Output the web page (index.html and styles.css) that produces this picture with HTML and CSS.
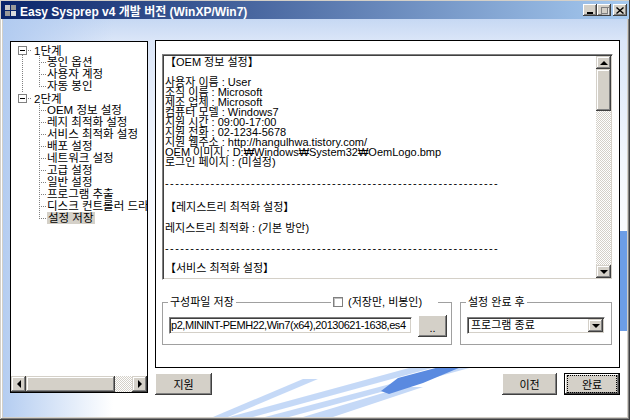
FILE: index.html
```html
<!doctype html>
<html lang="ko">
  <head>
    <meta charset="UTF-8" />
    <title>Easy Sysprep v4 개발 버전 (WinXP/Win7)</title>
    <link rel="stylesheet" href="styles.css">
  </head>
  <body>
    <div class="window">
      <div class="titlebar">
        <svg class="app-icon" width="11" height="11" viewBox="0 0 11 11">
          <rect x="0" y="0" width="5" height="5" fill="#c8c8c8" />
          <rect x="6" y="0" width="5" height="5" fill="#9a9a9a" />
          <rect x="0" y="6" width="5" height="5" fill="#9a9a9a" />
          <rect x="6" y="6" width="5" height="5" fill="#dcdcdc" />
        </svg>
        <span class="title">Easy Sysprep v4 개발 버전 (WinXP/Win7)</span>
        <div class="caption">
          <div class="cap-btn">
            <svg width="8" height="7" viewBox="0 0 8 7"><rect x="1" y="5" width="6" height="2" fill="#000" /></svg>
          </div>
          <div class="cap-btn">
            <svg width="9" height="9" viewBox="0 0 9 9">
              <rect x="1.5" y="1.5" width="6" height="6" fill="none" stroke="#808080" />
              <rect x="1" y="1" width="8" height="1" fill="#808080" />
              <path d="M9 2v7H2" fill="none" stroke="#fff" />
            </svg>
          </div>
          <div class="cap-btn close">
            <svg width="8" height="7" viewBox="0 0 8 7">
              <path d="M0.5 0.5l7 6M7.5 0.5l-7 6" stroke="#000" stroke-width="1.4" />
            </svg>
          </div>
        </div>
      </div>

      <div class="client">
        <!-- 왼쪽 트리 -->
        <div class="tree">
          <div class="tree-body">
            <div class="group">
              <div class="root"><span class="expander"></span><span class="stub"></span>1단계</div>
              <ul class="children">
                <li>봉인 옵션</li>
                <li>사용자 계정</li>
                <li>자동 봉인</li>
              </ul>
            </div>
            <div class="group">
              <div class="root"><span class="expander"></span><span class="stub"></span>2단계</div>
              <ul class="children">
                <li>OEM 정보 설정</li>
                <li>레지 최적화 설정</li>
                <li>서비스 최적화 설정</li>
                <li>배포 설정</li>
                <li>네트워크 설정</li>
                <li>고급 설정</li>
                <li>일반 설정</li>
                <li>프로그램 추출</li>
                <li>디스크 컨트롤러 드라이버</li>
                <li><span class="sel">설정 저장</span></li>
              </ul>
            </div>
          </div>
          <div class="hscroll">
            <div class="sb-btn"><span class="arr-left"></span></div>
            <div class="sb-thumb"></div>
            <div class="sb-track"></div>
            <div class="sb-btn"><span class="arr-right"></span></div>
          </div>
        </div>

        <!-- 오른쪽 -->
        <div class="main">
          <div class="panel">
            <div class="report">
              <div class="report-text">
                <div class="ln">【OEM 정보 설정】</div>
                <div class="ln"></div>
                <div class="ln">사용자 이름 : User</div>
                <div class="ln">조직 이름 : Microsoft</div>
                <div class="ln">제조 업체 : Microsoft</div>
                <div class="ln">컴퓨터 모델 : Windows7</div>
                <div class="ln">지원 시간 : 09:00-17:00</div>
                <div class="ln">지원 전화 : 02-1234-5678</div>
                <div class="ln">지원 웹주소 : http://hangulhwa.tistory.com/</div>
                <div class="ln">OEM 이미지 : D:₩Windows₩System32₩OemLogo.bmp</div>
                <div class="ln">로그인 페이지 : (미설정)</div>
                <div class="ln dash gap-11">------------------------------------------------------------------</div>
                <div class="ln gap-14">【레지스트리 최적화 설정】</div>
                <div class="ln gap-11">레지스트리 최적화 : (기본 방안)</div>
                <div class="ln dash gap-10">------------------------------------------------------------------</div>
                <div class="ln gap-10">【서비스 최적화 설정】</div>
              </div>
              <div class="vscroll">
                <div class="sb-btn"><span class="arr-up"></span></div>
                <div class="sb-thumb"></div>
                <div class="sb-track"></div>
                <div class="sb-btn"><span class="arr-down"></span></div>
              </div>
            </div>

            <div class="groups">
              <div class="grp grp-save">
                <div class="grp-head">
                  <span class="lbl">구성파일 저장</span>
                  <label class="chk"><span class="chk-box"></span>(저장만, 비봉인)</label>
                </div>
                <div class="grp-body">
                  <div class="edit">p2,MININT-PEMH22,Win7(x64),20130621-1638,es4</div>
                  <div class="btn btn-dots">..</div>
                </div>
              </div>
              <div class="grp grp-done">
                <div class="grp-head">
                  <span class="lbl">설정 완료 후</span>
                </div>
                <div class="grp-body">
                  <div class="combo">
                    <span class="combo-text">프로그램 종료</span>
                    <span class="sb-btn combo-btn"><span class="arr-down"></span></span>
                  </div>
                </div>
              </div>
            </div>
          </div>

          <div class="buttons">
            <div class="btn btn-help">지원</div>
            <!-- 배경 줄무늬 -->
            <svg class="streaks" width="290" height="49" viewBox="212 368 290 49">
              <g fill="#96b9f0" fill-opacity="0.55">
                <polygon points="229,417 420,365 443,365 253,417" />
                <polygon points="265,417 455,367 473,367 289,417" />
                <polygon points="303,417 403,387 423,387 333,417" />
                <polygon points="213,417 303,379 318,379 228,417" />
              </g>
              <polygon fill="#5a8ae0" points="381,391 398,378 458,362 473,362 423,383 389,394" />
            </svg>
            <div class="btn btn-prev">이전</div>
            <div class="btn btn-done"><span class="focus">완료</span></div>
          </div>
        </div>
      </div>
    </div>
  </body>
</html>
```

FILE: styles.css
```css
/* 기본 */
* {
  box-sizing: border-box;
  margin: 0;
  padding: 0;
}

body {
  width: 630px;
  height: 420px;
  overflow: hidden;
  font-family: "Liberation Sans", "Noto Sans CJK KR", sans-serif;
  font-size: 11px;
  color: #000;
}

/* 창 테두리 */
.window {
  width: 630px;
  height: 420px;
  padding: 1px;
  display: flex;
  flex-direction: column;
  background-color: #d4d0c8;
  box-shadow: inset -1px -1px #404040, inset 1px 1px #d4d0c8,
    inset -2px -2px #808080, inset 2px 2px #fff;
}

.titlebar {
  height: 18px;
  display: flex;
  align-items: center;
  padding-left: 4px;
  background: linear-gradient(to right, #0a246a, #a6caf0);
  color: #fff;
  font-size: 12px;
  font-weight: bold;
  white-space: nowrap;
}

.app-icon {
  margin-right: 4px;
}

.caption {
  display: flex;
  margin-left: auto;
  margin-right: 2px;
}

.cap-btn {
  width: 14px;
  height: 12px;
  display: flex;
  align-items: center;
  justify-content: center;
  background-color: #d4d0c8;
  box-shadow: inset -1px -1px #404040, inset 1px 1px #fff,
    inset -2px -2px #808080;
}

.cap-btn.close {
  margin-left: 2px;
}

/* 클라이언트 영역 */
.client {
  flex: 1;
  display: flex;
  margin: 0 2px 2px;
  padding: 21px 7px 0;
  background-color: #fff;
  background-image:
    linear-gradient(#6c9de6, #6c9de6),
    linear-gradient(90deg, rgba(176, 202, 240, 0.95) 0, rgba(176, 202, 240, 0) 110px),
    linear-gradient(180deg, #c6d8f3 0, #dbe6f8 22px, #f2f6fd 140px, #fff 260px);
  background-position: 617px 212px, 0 0, 0 0;
  background-size: 7px 100px, 100% 100%, 100% 100%;
  background-repeat: no-repeat;
}

/* 스크롤바 공통 */
.sb-btn {
  display: flex;
  align-items: center;
  justify-content: center;
  background-color: #d4d0c8;
  box-shadow: inset -1px -1px #404040, inset 1px 1px #d4d0c8,
    inset -2px -2px #808080, inset 2px 2px #fff;
}

.sb-thumb {
  background-color: #d4d0c8;
  box-shadow: inset -1px -1px #404040, inset 1px 1px #d4d0c8,
    inset -2px -2px #808080, inset 2px 2px #fff;
}

.sb-track {
  flex: 1;
  background: repeating-conic-gradient(#d4d0c8 0 25%, #fff 0 50%) 0 0 / 2px 2px;
}

.arr-up,
.arr-down,
.arr-left,
.arr-right {
  width: 0;
  height: 0;
  border: 4px solid transparent;
}

.arr-up {
  border-top-width: 0;
  border-bottom-color: #000;
}

.arr-down {
  border-bottom-width: 0;
  border-top-color: #000;
}

.arr-left {
  border-left-width: 0;
  border-right-color: #000;
}

.arr-right {
  border-right-width: 0;
  border-left-color: #000;
}

/* 트리 */
.tree {
  width: 138px;
  height: 352px;
  margin-top: 1px;
  display: flex;
  flex-direction: column;
  border: 1px solid #000;
  background-color: #fff;
  font-size: 11.5px;
}

.tree-body {
  flex: 1;
  padding: 2px 0 0 7px;
  overflow: hidden;
}

.group:first-child {
  background: repeating-linear-gradient(#808080 0 1px, transparent 1px 2px) 4px 11px / 1px calc(100% - 11px) no-repeat;
}

.root {
  height: 12px;
  display: flex;
  align-items: center;
  white-space: nowrap;
}

.expander {
  width: 9px;
  height: 9px;
  border: 1px solid #808080;
  background: #fff linear-gradient(#000, #000) center / 5px 1px no-repeat;
}

.stub {
  width: 4px;
  height: 1px;
  margin: 0 2px 0 1px;
  background: repeating-linear-gradient(90deg, #808080 0 1px, transparent 1px 2px);
}

.children {
  list-style: none;
  margin-left: 21px;
}

.children li {
  height: 12px;
  line-height: 12px;
  padding-left: 8px;
  white-space: nowrap;
  background:
    repeating-linear-gradient(#808080 0 1px, transparent 1px 2px) 0 0 / 1px 100% no-repeat,
    repeating-linear-gradient(90deg, #808080 0 1px, transparent 1px 2px) 0 6px / 8px 1px no-repeat;
}

.children li:last-child {
  background-size: 1px 7px, 8px 1px;
}

.sel {
  padding: 0 1px;
  background-color: #d4d0c8;
}

.hscroll {
  height: 16px;
  display: flex;
}

.hscroll .sb-btn {
  width: 15px;
}

.hscroll .sb-thumb {
  width: 89px;
}

/* 오른쪽 */
.main {
  width: 465px;
  margin-left: 7px;
  display: flex;
  flex-direction: column;
}

.panel {
  height: 328px;
  padding: 13px 6px 0;
  border: 1px solid #000;
  background-color: #fff;
}

.report {
  height: 226px;
  display: flex;
  border: 1px solid;
  border-color: #808080 #fff #fff #808080;
  box-shadow: inset 1px 1px #404040, inset -1px -1px #d4d0c8;
}

.report-text {
  flex: 1;
  padding: 2px 0 0 2px;
  overflow: hidden;
  line-height: 10px;
  white-space: nowrap;
}

.ln {
  height: 10px;
}

.dash {
  letter-spacing: 1.4px;
}

.gap-10 {
  margin-top: 10px;
}

.gap-11 {
  margin-top: 11px;
}

.gap-14 {
  margin-top: 14px;
}

.vscroll {
  width: 15px;
  display: flex;
  flex-direction: column;
  margin: 1px 1px 1px 0;
}

.vscroll .sb-btn {
  height: 13px;
}

.vscroll .sb-thumb {
  height: 42px;
}

/* 그룹 박스 */
.groups {
  display: flex;
  gap: 8px;
  margin-top: 22px;
}

.grp {
  height: 43px;
  border: 1px solid #a0a0a0;
}

.grp-save {
  width: 290px;
}

.grp-done {
  width: 152px;
}

.grp-head {
  height: 12px;
  display: flex;
  margin-top: -7px;
  line-height: 12px;
  white-space: nowrap;
}

.lbl {
  margin-left: 5px;
  padding: 0 2px;
  background-color: #fff;
}

.chk {
  width: 107px;
  display: flex;
  align-items: center;
  gap: 5px;
  margin-left: auto;
  margin-right: 13px;
  padding-left: 2px;
  background-color: #fff;
}

.chk-box {
  width: 10px;
  height: 10px;
  border: 1px solid #808080;
  box-shadow: inset 1px 1px #c0c0c0;
  background-color: #fff;
}

.grp-body {
  display: flex;
  align-items: flex-start;
  padding: 7px 0 0 6px;
}

.edit {
  width: 243px;
  height: 17px;
  margin-top: 2px;
  padding: 0 1px;
  overflow: hidden;
  white-space: nowrap;
  line-height: 14px;
  letter-spacing: -0.45px;
  border: 1px solid;
  border-color: #808080 #fff #fff #808080;
  box-shadow: inset 1px 1px #404040, inset -1px -1px #d4d0c8;
}

.combo {
  width: 138px;
  height: 17px;
  margin-top: 2px;
  display: flex;
  align-items: center;
  padding: 1px;
  border: 1px solid;
  border-color: #808080 #fff #fff #808080;
  box-shadow: inset 1px 1px #404040, inset -1px -1px #d4d0c8;
}

.combo-text {
  flex: 1;
  padding-left: 2px;
  line-height: 13px;
}

.combo-btn {
  width: 15px;
  height: 13px;
}

/* 버튼 */
.btn {
  height: 22px;
  display: flex;
  align-items: center;
  justify-content: center;
  background-color: #d4d0c8;
  box-shadow: inset -1px -1px #404040, inset 1px 1px #fff,
    inset -2px -2px #808080, inset 2px 2px #d4d0c8;
}

.btn-dots {
  width: 29px;
  margin-left: 6px;
  padding-top: 4px;
}

.buttons {
  display: flex;
  align-items: flex-start;
  margin-top: 5px;
}

.streaks {
  flex-shrink: 0;
  margin-top: -5px;
}

.btn-help {
  width: 57px;
  flex-shrink: 0;
}

.btn-prev {
  width: 55px;
  margin-left: auto;
}

.btn-done {
  width: 56px;
  margin-left: 7px;
  border: 1px solid #000;
}

.focus {
  width: 48px;
  height: 16px;
  display: flex;
  align-items: center;
  justify-content: center;
  outline: 1px dotted #000;
}
```
